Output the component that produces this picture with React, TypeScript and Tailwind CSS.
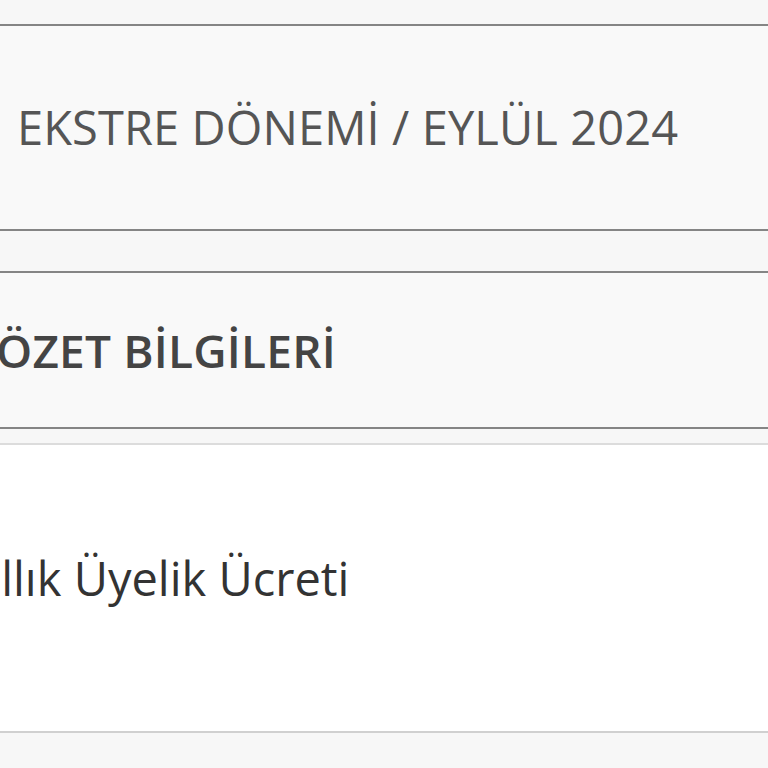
export default function App() {
  return (
    <div className="w-[768px] h-[768px] overflow-hidden bg-[#f7f7f7]" style={{ fontFamily: '"Open Sans", "Noto Sans", sans-serif' }}>
      <div className="h-[24px]" />
      <div className="h-[207px] border-y-2 border-[#858585] bg-[#f9f9f9] flex items-center pl-[17px]">
        <span className="text-[47px] text-[#555] tracking-[0.1px] whitespace-nowrap leading-none">EKSTRE DÖNEMİ / EYLÜL 2024</span>
      </div>
      <div className="h-[40px]" />
      <div className="h-[158px] border-y-2 border-[#858585] bg-[#f9f9f9] flex items-center">
        <span className="text-[46px] font-semibold text-[#444] tracking-[0.2px] whitespace-nowrap leading-none ml-[-4px]">ÖZET BİLGİLERİ</span>
      </div>
      <div className="h-[16px] border-b-2 border-[#dcdcdc] bg-[#f7f7f7]" />
      <div className="h-[288px] border-b-2 border-[#d0d0d0] bg-white flex items-center pb-[20px]">
        <span className="text-[47px] text-[#333] whitespace-nowrap leading-none ml-[-37px]">Yıllık Üyelik Ücreti</span>
      </div>
    </div>
  );
}
